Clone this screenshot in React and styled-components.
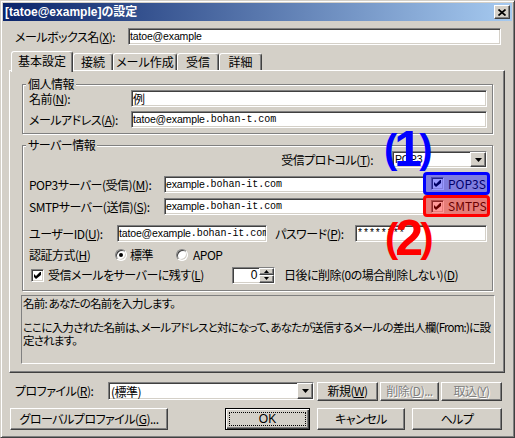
import React from 'react';
import styled, { createGlobalStyle, css } from 'styled-components';

const FACE = '#d4d0c8';

const Global = createGlobalStyle`
  html, body { margin: 0; padding: 0; background: ${FACE}; }
  * { box-sizing: border-box; }
  u { text-decoration: underline; text-underline-offset: 1px; }
`;

const raised = css`
  border: 1px solid;
  border-color: #fff #404040 #404040 #fff;
  box-shadow: inset -1px -1px #808080;
`;

const sunken = css`
  border: 1px solid;
  border-color: #808080 #fff #fff #808080;
  box-shadow: inset 1px 1px #404040, inset -1px -1px ${FACE};
`;

const Window = styled.div`
  width: 515px;
  height: 438px;
  background: ${FACE};
  border: 1px solid;
  border-color: ${FACE} #404040 #404040 ${FACE};
  box-shadow: inset 1px 1px #fff, inset -1px -1px #808080;
  padding: 2px;
  display: flex;
  flex-direction: column;
  font-family: "Noto Sans CJK JP", "Liberation Sans", sans-serif;
  font-size: 12px;
  letter-spacing: -0.5px;
  font-feature-settings: "palt";
  color: #000;
  overflow: hidden;
`;

const TitleBar = styled.div`
  height: 18px;
  flex: none;
  display: flex;
  align-items: center;
  justify-content: space-between;
  padding: 0 2px 0 2px;
  background: linear-gradient(to right, #0a246a, #a6caf0);
`;

const TitleText = styled.span`
  color: #fff;
  font-family: "Liberation Sans", "Noto Sans CJK JP", sans-serif;
  font-weight: bold;
  font-size: 12px;
  letter-spacing: 0;
  line-height: 14px;
  white-space: nowrap;
`;

const CloseButton = styled.div`
  width: 16px;
  height: 14px;
  background: ${FACE};
  ${raised};
  display: flex;
  align-items: center;
  justify-content: center;
`;

const Body = styled.div`
  flex: 1;
  display: flex;
  flex-direction: column;
  padding: 0 7px 0 6px;
`;

const Row = styled.div`
  display: flex;
  align-items: center;
  flex: none;
  height: ${p => p.$h || 17}px;
  margin-top: ${p => p.$mt || 0}px;
  padding-left: ${p => p.$pl || 0}px;
  justify-content: ${p => (p.$end ? 'flex-end' : 'flex-start')};
`;

const Label = styled.span`
  flex: none;
  width: ${p => (p.$w ? `${p.$w}px` : 'auto')};
  margin-left: ${p => p.$ml || 0}px;
  margin-right: ${p => p.$mr || 0}px;
  line-height: 14px;
  white-space: nowrap;
`;

const Field = styled.div`
  ${sunken};
  background: #fff;
  height: ${p => p.$h || 17}px;
  width: ${p => (p.$w ? `${p.$w}px` : 'auto')};
  flex: ${p => (p.$w ? 'none' : 1)};
  margin-right: ${p => p.$mr || 0}px;
  display: flex;
  align-items: center;
  padding-left: 1px;
  white-space: nowrap;
  overflow: hidden;
  line-height: 13px;
`;

const Sans = styled.span`
  font-family: "Liberation Sans", sans-serif;
  font-size: 10.5px;
  letter-spacing: -0.15px;
`;

const Mono = styled.span`
  font-family: "Liberation Mono", monospace;
  font-size: 10px;
  letter-spacing: -0.05px;
`;

const TabStrip = styled.div`
  display: flex;
  align-items: flex-end;
  height: 19px;
  margin-top: 6px;
  padding-left: 2px;
  position: relative;
  z-index: 2;
  flex: none;
`;

const Tab = styled.div`
  width: ${p => p.$w}px;
  height: ${p => (p.$active ? 21 : 17)}px;
  margin-bottom: ${p => (p.$active ? -2 : 0)}px;
  padding-bottom: ${p => (p.$active ? 3 : 0)}px;
  background: ${FACE};
  border: 1px solid;
  border-bottom: none;
  border-color: #fff #404040 transparent #fff;
  border-radius: 3px 3px 0 0;
  box-shadow: inset -1px 0 #808080;
  display: flex;
  align-items: center;
  justify-content: center;
  line-height: 14px;
  white-space: nowrap;
  letter-spacing: 0;
`;

const Panel = styled.div`
  ${raised};
  position: relative;
  z-index: 1;
  padding: 7px 11px 8px 12px;
  display: flex;
  flex-direction: column;
  flex: none;
`;

const Group = styled.fieldset`
  position: relative;
  margin: ${p => p.$mt || 0}px 0 0 0;
  padding: 0 5px ${p => p.$pb || 5}px 6px;
  border: 1px solid #808080;
  box-shadow: inset 1px 1px #fff, 1px 1px #fff;
  min-width: 0;
`;

const Legend = styled.legend`
  margin-left: -3px;
  padding: 0 2px;
  line-height: 12px;
  font-size: 12px;
  background: ${FACE};
`;

const BoxOuter = styled.span`
  ${sunken};
  flex: none;
  width: 13px;
  height: 13px;
  background: #fff;
  display: flex;
  align-items: center;
  justify-content: center;
`;

const RadioOuter = styled.span`
  flex: none;
  width: 12px;
  height: 12px;
  border-radius: 50%;
  background: #fff;
  border: 1px solid;
  border-color: #808080 #fff #fff #808080;
  box-shadow: inset 1px 1px #404040, inset -1px -1px ${FACE};
  display: flex;
  align-items: center;
  justify-content: center;
`;

const RadioDot = styled.span`
  width: 4px;
  height: 4px;
  border-radius: 50%;
  background: #000;
`;

const Option = styled.span`
  display: flex;
  align-items: center;
  gap: ${p => p.$gap || 3}px;
  width: ${p => (p.$w ? `${p.$w}px` : 'auto')};
  margin-left: ${p => p.$ml || 0}px;
  flex: none;
  line-height: 14px;
  white-space: nowrap;
`;

const DropButton = styled.span`
  ${raised};
  background: ${FACE};
  width: 16px;
  align-self: stretch;
  margin: 0 0 0 auto;
  display: flex;
  align-items: center;
  justify-content: center;
  flex: none;
`;

const ComboField = styled(Field)`
  align-items: stretch;
  padding-left: 2px;
`;

const ComboValue = styled.span`
  display: flex;
  align-items: center;
`;

const SpinField = styled(Field)`
  padding: 0;
  align-items: stretch;
`;

const SpinValue = styled.span`
  flex: 1;
  text-align: right;
  padding-right: 2px;
  font-family: "Liberation Sans", sans-serif;
  font-size: 12px;
  align-self: center;
`;

const SpinButtons = styled.span`
  width: 15px;
  flex: none;
  display: flex;
  flex-direction: column;
  align-self: stretch;
`;

const SpinBtn = styled.span`
  ${raised};
  background: ${FACE};
  flex: 1;
  display: flex;
  align-items: center;
  justify-content: center;
`;

const HelpBox = styled.div`
  margin: 4px -2px 0 -1px;
  height: 69px;
  border: 1px solid;
  border-color: #808080 #fff #fff #808080;
  padding: 1px 0 0 1px;
  line-height: 13px;
  font-size: 11.5px;
  letter-spacing: -0.78px;
  white-space: nowrap;
  overflow: hidden;
`;

const HelpPara = styled.div`
  margin-top: ${p => p.$mt || 0}px;
`;

const Button = styled.div`
  ${raised};
  background: ${FACE};
  width: ${p => p.$w}px;
  height: ${p => p.$h || 22}px;
  margin-left: ${p => p.$ml || 0}px;
  flex: none;
  display: flex;
  align-items: center;
  justify-content: center;
  line-height: 14px;
  white-space: nowrap;
  color: ${p => (p.$disabled ? '#808080' : '#000')};
  text-shadow: ${p => (p.$disabled ? '1px 1px #fff' : 'none')};
`;

const DefaultButton = styled(Button)`
  border: 1px solid #000;
  box-shadow: inset 1px 1px #fff, inset -1px -1px #404040, inset -2px -2px #808080;
  padding: 3px;
  align-items: stretch;
`;

const FocusRing = styled.span`
  flex: 1;
  border: 1px dotted #000;
  display: flex;
  align-items: center;
  justify-content: center;
  font-family: "Liberation Sans", sans-serif;
  letter-spacing: 0;
`;

const Callout = styled.div`
  position: absolute;
  left: ${p => p.$x}px;
  top: ${p => p.$y}px;
  height: 44px;
  display: flex;
  align-items: center;
  color: ${p => p.$c};
  font-family: "Liberation Sans", sans-serif;
  font-weight: bold;
  line-height: 1;
  letter-spacing: 0;
  z-index: 5;
  font-feature-settings: normal;
`;

const Paren = styled.span`
  font-size: 40px;
`;

const Digit = styled.span`
  font-size: 50px;
  margin: 0 -3px;
`;

const Badge = styled.div`
  position: absolute;
  left: 400px;
  top: ${p => p.$y}px;
  width: 67px;
  height: ${p => p.$h}px;
  border: 3px solid ${p => p.$c};
  border-radius: 4px;
  background: ${FACE};
  display: flex;
  align-items: center;
  gap: 4px;
  padding-left: 5px;
  z-index: 4;
  line-height: 14px;
  letter-spacing: 0;
  &::after {
    content: '';
    position: absolute;
    inset: 0;
    background: ${p => p.$tint};
  }
`;

const Check = () => (
  <svg width="7" height="7" viewBox="0 0 7 7">
    <path d="M0 2 L2 4 L6 0 L7 0 L7 3 L2 7 L0 5 Z" fill="#000" />
  </svg>
);

const Checkbox = () => (
  <BoxOuter>
    <Check />
  </BoxOuter>
);

const Arrow = ({ up, w = 7, h = 4 }) => (
  <svg width={w} height={h} viewBox={`0 0 ${w} ${h}`}>
    <polygon points={up ? `${w / 2},0 ${w},${h} 0,${h}` : `0,0 ${w},0 ${w / 2},${h}`} fill="#000" />
  </svg>
);

const Combo = ({ w, h, children }) => (
  <ComboField $w={w} $h={h}>
    <ComboValue>{children}</ComboValue>
    <DropButton>
      <Arrow />
    </DropButton>
  </ComboField>
);

const tabs = [
  { t: '基本設定', w: 62, active: true },
  { t: '接続', w: 40 },
  { t: 'メール作成', w: 64 },
  { t: '受信', w: 42 },
  { t: '詳細', w: 43 },
];

export default function App() {
  return (
    <>
      <Global />
      <Window>
        <TitleBar>
          <TitleText>[tatoe@example]の設定</TitleText>
          <CloseButton>
            <svg width="8" height="7" viewBox="0 0 8 7">
              <path d="M0.5 0.5 L7.5 6.5 M7.5 0.5 L0.5 6.5" stroke="#000" strokeWidth="1.7" />
            </svg>
          </CloseButton>
        </TitleBar>
        <Body>
          <Row $mt={7} $pl={6}>
            <Label $w={113}>メールボックス名(<u>X</u>):</Label>
            <Field $mr={4}>
              <Sans>tatoe@example</Sans>
            </Field>
          </Row>

          <TabStrip>
            {tabs.map(tab => (
              <Tab key={tab.t} $w={tab.w} $active={tab.active}>
                {tab.t}
              </Tab>
            ))}
          </TabStrip>

          <Panel>
            <Group>
              <Legend>個人情報</Legend>
              <Row>
                <Label $w={102}>名前(<u>N</u>):</Label>
                <Field>例</Field>
              </Row>
              <Row $mt={4}>
                <Label $w={102}>メールアドレス(<u>A</u>):</Label>
                <Field>
                  <Sans>tatoe@example</Sans>
                  <Mono>.bohan-t.com</Mono>
                </Field>
              </Row>
            </Group>

            <Group $mt={5} $pb={6}>
              <Legend>サーバー情報</Legend>
              <Row $end>
                <Label $mr={19}>受信プロトコル(<u>T</u>):</Label>
                <Combo w={95} h={17}>
                  <Sans>POP3</Sans>
                </Combo>
              </Row>
              <Row $mt={8}>
                <Label $w={135}>POP3サーバー(受信)(<u>M</u>):</Label>
                <Field>
                  <Sans>example</Sans>
                  <Mono>.bohan-it.com</Mono>
                </Field>
              </Row>
              <Row $mt={5}>
                <Label $w={135}>SMTPサーバー(送信)(<u>S</u>):</Label>
                <Field>
                  <Sans>example</Sans>
                  <Mono>.bohan-it.com</Mono>
                </Field>
              </Row>
              <Row $mt={10}>
                <Label $w={88}>ユーザーID(<u>U</u>):</Label>
                <Field $w={150}>
                  <Sans>tatoe@example</Sans>
                  <Mono>.bohan-it.com</Mono>
                </Field>
                <Label $w={80} $ml={8}>パスワード(<u>P</u>):</Label>
                <Field>
                  <Mono>********</Mono>
                </Field>
              </Row>
              <Row $mt={4} $h={18}>
                <Label $w={86}>認証方式(<u>H</u>)</Label>
                <Option $w={61}>
                  <RadioOuter>
                    <RadioDot />
                  </RadioOuter>
                  <Label>標準</Label>
                </Option>
                <Option $gap={5}>
                  <RadioOuter />
                  <Label>APOP</Label>
                </Option>
              </Row>
              <Row $mt={2} $h={18}>
                <Option $w={201} $gap={4} $ml={2}>
                  <Checkbox />
                  <Label>受信メールをサーバーに残す(<u>L</u>)</Label>
                </Option>
                <SpinField $w={43}>
                  <SpinValue>0</SpinValue>
                  <SpinButtons>
                    <SpinBtn>
                      <Arrow up w={5} h={3} />
                    </SpinBtn>
                    <SpinBtn>
                      <Arrow w={5} h={3} />
                    </SpinBtn>
                  </SpinButtons>
                </SpinField>
                <Label $ml={9}>日後に削除(0の場合削除しない)(<u>D</u>)</Label>
              </Row>

              <Callout $x={361} $y={-24} $c="#0000ff">
                <Paren>(</Paren>
                <Digit>1</Digit>
                <Paren>)</Paren>
              </Callout>
              <Badge $y={21} $h={23} $c="#0000ff" $tint="rgba(0,0,255,0.4)">
                <Checkbox />
                <span>POP3S</span>
              </Badge>
              <Badge $y={44} $h={22} $c="#ff0000" $tint="rgba(255,0,0,0.4)">
                <Checkbox />
                <span>SMTPS</span>
              </Badge>
              <Callout $x={362} $y={65} $c="#ff0000">
                <Paren>(</Paren>
                <Digit>2</Digit>
                <Paren>)</Paren>
              </Callout>
            </Group>

            <HelpBox>
              <HelpPara>名前: あなたの名前を入力します。</HelpPara>
              <HelpPara $mt={11}>
                ここに入力された名前は、メールアドレスと対になって、あなたが送信するメールの差出人欄(From:)に設
                <br />
                定されます。
              </HelpPara>
            </HelpBox>
          </Panel>

          <Row $mt={9} $h={18} $pl={6}>
            <Label $w={93}>プロファイル(<u>R</u>):</Label>
            <Combo w={206} h={18}>
              (標準)
            </Combo>
            <Button $w={61} $h={19} $ml={3}>
              新規(<u>W</u>)
            </Button>
            <Button $w={59} $h={19} $ml={2} $disabled>
              削除(<u>D</u>)...
            </Button>
            <Button $w={61} $h={19} $ml={2} $disabled>
              取込(<u>Y</u>)
            </Button>
          </Row>

          <Row $mt={8} $h={22}>
            <Button $w={158} $ml={1}>
              グローバルプロファイル(<u>G</u>)...
            </Button>
            <DefaultButton $w={85} $ml={57}>
              <FocusRing>OK</FocusRing>
            </DefaultButton>
            <Button $w={88} $ml={7}>
              キャンセル
            </Button>
            <Button $w={90} $ml={7}>
              ヘルプ
            </Button>
          </Row>
        </Body>
      </Window>
    </>
  );
}
